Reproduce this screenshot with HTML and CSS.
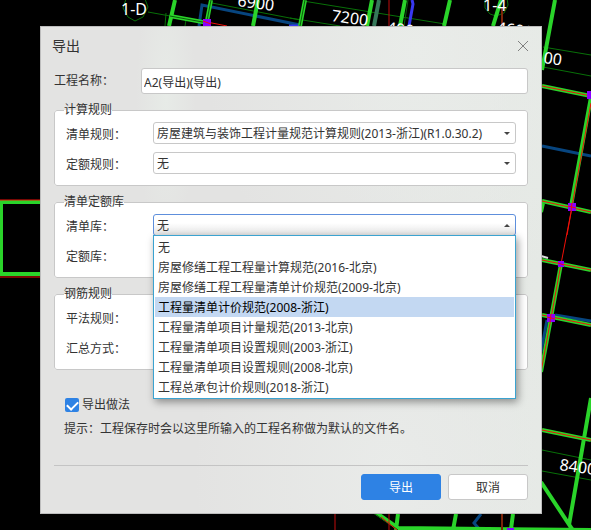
FILE: index.html
```html
<!DOCTYPE html>
<html lang="zh-CN">
<head>
  <meta charset="UTF-8" />
  <meta name="viewport" content="width=device-width, initial-scale=1.0" />
  <title>导出</title>
  <link rel="stylesheet" href="styles.css">
</head>
<body>
  <svg class="drawing" viewBox="0 0 591 530" preserveAspectRatio="xMinYMin slice" aria-hidden="true">
    <!-- dimension lines and axis bubbles -->
    <g class="thin">
      <path d="M126 -1L123 8L128 17L135 21L143 17L148 7L145 -1M148 12L170 16M166 13L165 26M186 20L185 26M212 3L300 20M303 1L445 24M290 18L340 26" />
      <path d="M485 -2L485 8L490 14L496 16L504 13L508 5L507 -2M543 47L591 55M543 67L591 76M542 450L591 460M542 471L591 480" />
    </g>
    <!-- beams -->
    <path class="blue" d="M199 26L202 5L300 25M542 146L591 156M555 315L591 321M547 320L541 352M481 514L474 523L480 530" />
    <path class="teal" d="M379 0L374 26" />
    <path class="violet" d="M412 0L413 4L409 26M289 26H300" />
    <path class="green" d="M175 0L169 26M258 0L253 26M372 0L367 26M405 0L400 26M450 0L444 26M501 0L493 26M555 0L542 70" />
    <path class="green" d="M170 16L208 23M211 0L206 26M305 0L300 26M542 86L591 96M591 97L571 206M542 201L591 212M542 260L591 270M542 315L591 325M561 264L541 372M542 430L591 440" />
    <path class="green" d="M591 398L569 525M541 482L574 532M398 514L396 530M456 514L453 530M513 514L511 529M375 512L398 528L591 530M543 203L541 212" />
    <path class="core-dark" d="M170 16L208 23M211 0L206 26M305 0L300 26M408 0L404 26M375 514L398 530" />
    <path class="green" d="M40 202H1V274H40" />
    <path class="core-red" d="M0 200H40M0 277H40M207 22L227 26M542 86L591 96M591 103L572 206M542 201L591 212M572 207L561 264M567 235L572 207M542 260L591 270M542 315L591 325M561 264L541 372M542 430L591 440M381 517L397 530" />
    <path class="red" d="M389 0V26M389 514V530M335 514V530" />
    <path class="brown" d="M502 8V26M502 514V530" />
    <path class="node" d="M203 19h8v8h-8zM587 91h8v8h-8zM568 203h8v8h-8zM558 261h6v6h-6zM547 314h8v8h-8zM507 528h7v3h-7z" />
    <path class="core-red" d="M203 21L211 24M568 206L576 208M572 203L571 211M558 263L564 265M547 317L555 319M551 314L550 322" />
    <g class="dims">
      <text x="121" y="15">1-D</text>
      <text x="483" y="11">1-4</text>
      <text transform="translate(237 6) rotate(8)">6900</text>
      <text transform="translate(331 21) rotate(8)">7200</text>
      <text transform="translate(386 33) rotate(8)">400</text>
      <text transform="translate(496 33) rotate(8)">4600</text>
      <text transform="translate(543 63) rotate(8)">00</text>
      <text transform="translate(559 470) rotate(8)">8400</text>
      <path d="M541 256L548 258" />
    </g>
  </svg>

  <form class="dialog" role="dialog" aria-labelledby="title">
    <div class="header">
      <h1 id="title">导出</h1>
      <button type="button" class="close" aria-label="关闭">
        <svg viewBox="0 0 12 12"><path d="M1 1L11 11M11 1L1 11" /></svg>
      </button>
    </div>

    <div class="name-row">
      <label for="name">工程名称：</label>
      <input type="text" id="name" value="A2(导出)(导出)">
    </div>

    <fieldset>
      <legend>计算规则</legend>
      <div class="row">
        <label for="list-rule">清单规则：</label>
        <div class="combo">
          <select id="list-rule"><option>房屋建筑与装饰工程计量规范计算规则(2013-浙江)(R1.0.30.2)</option></select>
        </div>
      </div>
      <div class="row">
        <label for="quota-rule">定额规则：</label>
        <div class="combo">
          <select id="quota-rule"><option>无</option></select>
        </div>
      </div>
    </fieldset>

    <fieldset>
      <legend>清单定额库</legend>
      <div class="row">
        <label for="list-lib">清单库：</label>
        <div class="combo open">
          <select id="list-lib"><option>无</option></select>
          <ul class="menu" role="listbox" aria-label="清单库">
            <li role="option">无</li>
            <li role="option">房屋修缮工程工程量计算规范(2016-北京)</li>
            <li role="option">房屋修缮工程工程量清单计价规范(2009-北京)</li>
            <li role="option" class="active" aria-selected="true">工程量清单计价规范(2008-浙江)</li>
            <li role="option">工程量清单项目计量规范(2013-北京)</li>
            <li role="option">工程量清单项目设置规则(2003-浙江)</li>
            <li role="option">工程量清单项目设置规则(2008-北京)</li>
            <li role="option">工程总承包计价规则(2018-浙江)</li>
          </ul>
        </div>
      </div>
      <div class="row">
        <label for="quota-lib">定额库：</label>
        <div class="combo">
          <select id="quota-lib"></select>
        </div>
      </div>
    </fieldset>

    <fieldset>
      <legend>钢筋规则</legend>
      <div class="row">
        <label for="flat-rule">平法规则：</label>
        <div class="combo">
          <select id="flat-rule"></select>
        </div>
      </div>
      <div class="row">
        <label for="summary">汇总方式：</label>
        <div class="combo">
          <select id="summary"></select>
        </div>
      </div>
    </fieldset>

    <div class="check-row">
      <input type="checkbox" id="method" checked>
      <label for="method">导出做法</label>
    </div>
    <p class="hint">提示：工程保存时会以这里所输入的工程名称做为默认的文件名。</p>

    <div class="footer">
      <button type="submit" class="btn primary">导出</button>
      <button type="button" class="btn">取消</button>
    </div>
  </form>
</body>
</html>
```
FILE: styles.css
```css
* {
  box-sizing: border-box;
}

body {
  margin: 0;
  min-height: 100vh;
  background: #000;
  color: #333;
  font: 12px/18px "Noto Sans", "Noto Sans CJK SC", sans-serif;
  display: flow-root;
}

input, select, button {
  font: inherit;
  color: inherit;
}

/* CAD canvas behind the dialog */
.drawing {
  position: absolute;
  inset: 0;
  width: 100%;
  height: 100%;
  fill: none;
}

.thin { stroke: #087008; stroke-width: 1; }
.blue { stroke: #07457f; stroke-width: 3; }
.teal { stroke: #36785a; stroke-width: 4; }
.violet { stroke: #3838f0; stroke-width: 3; }
.green { stroke: #2ad42a; stroke-width: 4; }
.core-dark { stroke: #0a5c0a; stroke-width: 1; }
.core-red { stroke: #f01008; stroke-width: 1; }
.red { stroke: #c00c0c; stroke-width: 1; }
.brown { stroke: #7c2408; stroke-width: 2; }
.node { fill: #8a00ff; }

.dims text {
  fill: #fff;
  font-size: 16px;
}

.dims path {
  stroke: #ddd;
  stroke-width: 2;
}

.dialog {
  position: relative;
  margin: 26px 49px 16px 40px;
  padding: 10px 13px 13px;
  border: 1px solid #bdbdbd;
  background:
    radial-gradient(ellipse 30px 140px at 25% 15%, #e7ebe7, transparent),
    radial-gradient(ellipse at 75% 5%, #e9ece9, transparent 40%),
    radial-gradient(ellipse at 70% 92%, #e9ebe9, transparent 40%),
    linear-gradient(90deg, #e3e3e2 60%, #e5e9e5);
}

.header {
  display: flex;
  justify-content: space-between;
  align-items: center;
  height: 18px;
}

h1 {
  margin: 0 0 0 -2px;
  font-size: 14px;
  font-weight: normal;
}

.close {
  width: 12px;
  height: 12px;
  margin-right: -1px;
  padding: 0;
  border: 0;
  background: none;
}

.close svg {
  display: block;
  stroke: #808080;
  fill: none;
}

.name-row {
  display: flex;
  align-items: center;
  margin-top: 13px;
}

.name-row label {
  width: 87px;
}

.name-row input {
  flex: 1;
  min-width: 0;
  height: 26px;
  padding: 2px 2px 0;
  border: 1px solid #c8c8c8;
  border-radius: 3px;
  background: #fff;
}

fieldset {
  margin: 7px 0 0;
  padding: 3px 11px 11px;
  border: 1px solid #c8c8c8;
  border-radius: 3px;
  background: #fff;
  min-width: 0;
}

legend {
  margin-left: -2px;
  padding: 0;
}

.row {
  display: flex;
}

.row + .row {
  margin-top: 8px;
}

.row label {
  width: 87px;
  padding-top: 4px;
  height: 22px;
}

.combo {
  position: relative;
  flex: 1;
  min-width: 0;
}

.combo::after {
  content: "";
  position: absolute;
  right: 6px;
  top: 10px;
  border: 3px solid transparent;
  border-top-color: #444;
  border-bottom: 0;
}

.combo.open::after {
  border-top: 0;
  border-bottom: 3px solid #444;
}

select {
  display: block;
  appearance: none;
  width: 100%;
  height: 22px;
  padding: 2px 16px 0 3px;
  border: 1px solid #c8c8c8;
  border-radius: 3px;
  background: #fff;
}

.open select {
  border-color: #5e8fdc;
  background: linear-gradient(#fff 40%, #e4e4e4);
}

.menu {
  position: absolute;
  z-index: 1;
  top: 21px;
  left: 0;
  right: 0;
  margin: 0;
  padding: 1px;
  border: 1px solid #3ba3d0;
  background: #fff;
  box-shadow: 2px 3px 8px rgba(0, 0, 0, 0.4);
  list-style: none;
}

.menu li {
  height: 20px;
  padding: 0 3px;
  line-height: 22px;
}

.menu .active {
  background: #c3d8f2;
  color: #000;
}

.check-row {
  display: flex;
  align-items: center;
  gap: 3px;
  margin: 26px 0 0 11px;
}

.check-row input {
  appearance: none;
  width: 14px;
  height: 14px;
  margin: 0;
  border-radius: 2px;
  background: #2e82e4;
  display: grid;
  place-items: center;
}

.check-row input:checked::before {
  content: "";
  width: 9px;
  height: 5px;
  border: solid #fff;
  border-width: 0 0 2px 2px;
  transform: translateY(-1px) rotate(-45deg);
}

.hint {
  margin: 6px 0 0 10px;
}

.footer {
  display: flex;
  justify-content: flex-end;
  gap: 7px;
  margin-top: 27px;
  padding-top: 8px;
  border-top: 1px solid #c4c4c4;
}

.btn {
  width: 80px;
  height: 26px;
  padding: 2px 0 0;
  border: 1px solid #c8c8c8;
  border-radius: 3px;
  background: #fff;
}

.primary {
  border-color: #2e82e4;
  background: #2e82e4;
  color: #fff;
}
```
